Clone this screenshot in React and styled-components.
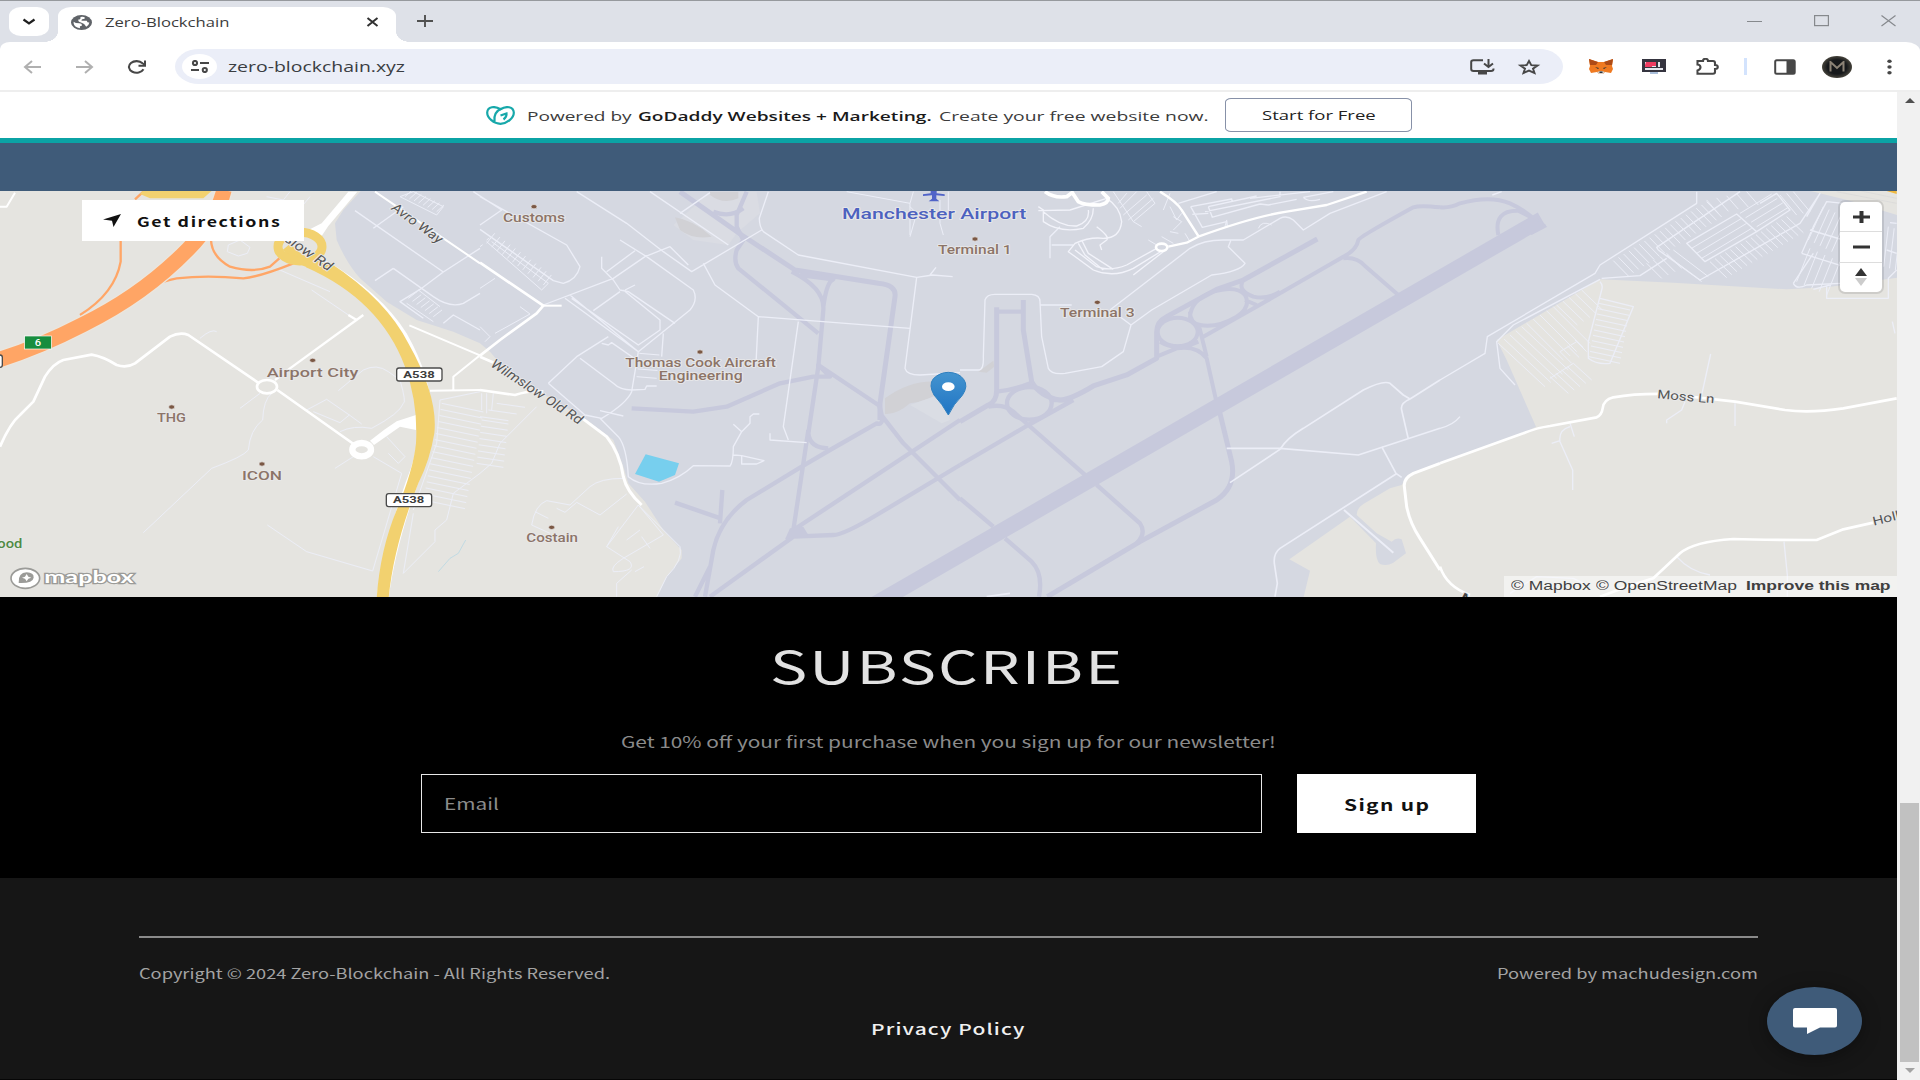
import React, { useLayoutEffect, useRef, useState } from "react";
import styled, { createGlobalStyle } from "styled-components";

const SITE = '"Noto Sans CJK SC", "Open Sans", sans-serif';
const CHROME = '"Open Sans", "Noto Sans", sans-serif';

const Global = createGlobalStyle`
  * { box-sizing: border-box; }
  html, body { margin: 0; padding: 0; overflow: hidden; background: #161616; }
  body { font-family: ${SITE}; }
  button { border: 0; padding: 0; margin: 0; background: none; font: inherit; }
`;

/* Text set wide: the glyphs are scaled horizontally to fill a given width. */
const FitBox = styled.span`
  display: block;
  flex: none;
  width: ${(p) => p.$w}px;
  text-align: left;
  white-space: pre;
  line-height: 24px;
  height: 24px;
  font-family: ${(p) => p.$font || SITE};
  font-size: ${(p) => p.$size || 14}px;
  font-weight: ${(p) => p.$weight || 400};
  letter-spacing: ${(p) => p.$track || 0}px;
  color: ${(p) => p.$color || "inherit"};
`;
const FitInner = styled.span`
  display: inline-block;
  transform-origin: 0 50%;
`;
function FitText({ width, font, size, weight, track = 0, color, className, children }) {
  const ref = useRef(null);
  const [k, setK] = useState(1);
  useLayoutEffect(() => {
    const n = ref.current.offsetWidth - track;
    if (n > 0) setK(width / n);
  }, [width, track]);
  return (
    <FitBox className={className} $w={width} $font={font} $size={size} $weight={weight} $track={track} $color={color}>
      <FitInner ref={ref} style={{ transform: `scaleX(${k})` }}>{children}</FitInner>
    </FitBox>
  );
}

const Window = styled.div`
  width: 1920px;
  height: 1080px;
  display: flex;
  flex-direction: column;
  background: #dee1e8;
  border-top: 1px solid #96999d;
  overflow: hidden;
`;

/* ---------- tab strip ---------- */
const TabStrip = styled.div`
  height: 41px;
  flex: none;
  display: flex;
  align-items: flex-start;
  padding: 6px 24px 0 9px;
`;
const TabSearch = styled.button`
  width: 40px;
  height: 29px;
  border-radius: 12px / 9px;
  background: #fff;
  display: grid;
  place-items: center;
`;
const Tab = styled.div`
  position: relative;
  width: 338px;
  height: 35px;
  margin-left: 9px;
  padding: 0 17px 5px 13px;
  display: flex;
  align-items: center;
  background: #fff;
  border-radius: 13px 13px 0 0 / 9px 9px 0 0;
  &::before, &::after {
    content: "";
    position: absolute;
    bottom: 0;
    width: 14px;
    height: 10px;
  }
  &::before { left: -14px; background: radial-gradient(14px 10px at 0 0, transparent 97%, #fff 100%); }
  &::after { right: -14px; background: radial-gradient(14px 10px at 100% 0, transparent 97%, #fff 100%); }
`;
const TabTitle = styled(FitText)`margin-left: 13px;`;
const TabClose = styled.span`margin-left: auto; display: flex;`;
const NewTab = styled.span`margin: 8px 0 0 21px; display: flex;`;
const WinControls = styled.div`
  margin: 8px 0 0 auto;
  display: flex;
  gap: 52px;
`;

/* ---------- toolbar ---------- */
const Toolbar = styled.div`
  height: 50px;
  flex: none;
  display: flex;
  align-items: center;
  padding: 1px 26px 0 23px;
  background: #fff;
  border-bottom: 2px solid #eee;
  border-radius: 10px 14px 0 0 / 7px 9px 0 0;
`;
const Nav = styled.div`display: flex; align-items: center; gap: 33px; svg { display: block; }`;
const Omnibox = styled.div`
  width: 1388px;
  height: 35px;
  margin-left: 28px;
  padding: 0 22px 0 7px;
  display: flex;
  align-items: center;
  background: #ebeef8;
  border-radius: 24px / 17.5px;
`;
const SiteChip = styled.span`
  width: 35px;
  height: 25px;
  margin-right: 11px;
  border-radius: 50%;
  background: #fff;
  display: grid;
  place-items: center;
`;
const OmniIcons = styled.span`margin-left: auto; display: flex; gap: 22px; align-items: center;`;
const Extensions = styled.div`
  display: flex;
  align-items: center;
  margin-left: 26px;
  gap: 29px;
`;
const Divider = styled.i`width: 3px; height: 17px; margin: 0 -2px 0 -4px; background: #d3e3fd;`;
const Avatar = styled.span`
  width: 30px;
  height: 22px;
  margin: 0 6px 0 -3px;
  border-radius: 50%;
  background: radial-gradient(#16181b 45%, #48453c 72%);
  display: grid;
  place-items: center;
`;

/* ---------- page ---------- */
const Viewport = styled.div`flex: 1; display: flex; min-height: 0;`;
const Page = styled.main`width: 1897px; display: flex; flex-direction: column;`;
const Scroll = styled.aside`
  width: 23px;
  background: #f1f1f1;
  display: flex;
  flex-direction: column;
  align-items: center;
  padding: 6px 1px 0 3px;
`;
const Thumb = styled.i`width: 19px; height: 259px; margin-top: 700px; background: #c1c1c1;`;
const Caret = styled.i`
  width: 0; height: 0;
  border: 5.5px solid transparent;
  ${(p) => (p.$down ? "border-top: 5px solid #a3a3a3; border-bottom: 0; margin-top: 6px;" : "border-bottom: 5px solid #505050; border-top: 0;")}
`;

const Promo = styled.div`
  height: 51px;
  flex: none;
  display: flex;
  align-items: center;
  padding: 0 0 0 486px;
  background: #fff;
  border-bottom: 5px solid #0ba3a5;
`;
const PromoText = styled.div`display: flex; gap: 7px; margin-left: 12px; padding-top: 1px;`;
const PromoButton = styled.button`
  width: 187px;
  height: 34px;
  margin-left: 17px;
  border: 1px solid #8791a8;
  border-radius: 6px / 4px;
  padding-bottom: 1px;
  display: flex;
  justify-content: center;
  align-items: center;
`;
const Band = styled.div`height: 48px; flex: none; background: #3f5b79;`;

const MapPane = styled.section`
  position: relative;
  height: 406px;
  flex: none;
  overflow: hidden;
  background: #e5e4e0;
`;
const MapSvg = styled.svg`display: block;`;
const Directions = styled.button`
  position: absolute;
  left: 82px;
  top: 9px;
  width: 222px;
  height: 41px;
  padding-left: 21px;
  display: flex;
  align-items: center;
  gap: 16px;
  background: #fff;
  color: #111;
`;
const Zoomer = styled.div`
  position: absolute;
  left: 1840px;
  top: 11px;
  width: 42px;
  height: 90px;
  border-radius: 5px;
  background: #fff;
  box-shadow: 0 0 0 2px rgba(0, 0, 0, 0.1);
  display: flex;
  flex-direction: column;
`;
const ZoomKey = styled.button`
  flex: 1;
  display: grid;
  place-items: center;
  & + & { border-top: 1px solid #ddd; }
`;
const Attribution = styled.div`
  position: absolute;
  right: 0;
  bottom: 0;
  width: 393px;
  height: 21px;
  padding: 0 7px 1px;
  display: flex;
  align-items: center;
  background: rgba(255, 255, 255, 0.5);
  color: #404040;
`;
const Gap = styled.i`flex: 1;`;

const Subscribe = styled.section`
  height: 281px;
  flex: none;
  background: #000;
  display: flex;
  flex-direction: column;
  align-items: center;
  padding-top: 56px;
`;
const Title = styled(FitText)`margin-right: 5px;`;
const Lead = styled(FitText)`margin-top: 52px; margin-right: 1px;`;
const Form = styled.div`display: flex; gap: 35px; margin-top: 21px;`;
const Field = styled.div`
  width: 841px;
  height: 59px;
  padding: 0 0 2px 22px;
  border: 1px solid #e8e8e8;
  display: flex;
  align-items: center;
`;
const Submit = styled.button`
  width: 179px;
  height: 59px;
  background: #fff;
  display: grid;
  place-items: center;
`;
const Footer = styled.footer`
  position: relative;
  flex: 1;
  background: #161616;
  padding: 58px 139px 0;
  display: flex;
  flex-direction: column;
  align-items: center;
  border-bottom: 1px solid #060606;
`;
const Legal = styled.div`
  width: 1619px;
  padding-top: 23px;
  border-top: 2px solid #8a8a8a;
  display: flex;
  justify-content: space-between;
`;
const Policy = styled(FitText)`margin-top: 32px; margin-right: 1px;`;
const Chat = styled.button`
  position: absolute;
  left: 1767px;
  top: 109px;
  width: 95px;
  height: 68px;
  border-radius: 50%;
  background: #3f5b79;
  box-shadow: 0 3px 18px rgba(0, 0, 0, 0.35);
  display: grid;
  place-items: center;
`;

/* ---------- map drawing ---------- */
const ROAD = "#ffffff";
const LANE = "#eceef7";
const TAXI = "#c7c9dc";
const LAND = "#e5e4e0";

const Sheet = ({ x, children }) => (
  <g transform={`translate(${x} -1) scale(0.33333)`}>{children}</g>
);
const Line = ({ d, w = 4, c = LANE }) => (
  <path d={d} fill="none" stroke={c} strokeWidth={w} strokeLinejoin="round" />
);
const comb = (x1, y1, x2, y2, n, dx, dy) => {
  let d = "";
  for (let i = 0; i < n; i++) {
    const t = n > 1 ? i / (n - 1) : 0;
    d += `M${(x1 + (x2 - x1) * t).toFixed(1)} ${(y1 + (y2 - y1) * t).toFixed(1)}l${dx} ${dy}`;
  }
  return d;
};
const Label = ({ x, y, w, size = 36, c = "#8c7468", dot, rotate, weight = 500, italic, children }) => (
  <g>
    {dot && <ellipse cx={dot[0]} cy={dot[1]} rx="9" ry="6.5" fill="#7b5844" stroke="#eceaea" strokeWidth="2" />}
    <text
      x={x} y={y} textLength={w} lengthAdjust="spacingAndGlyphs" fontSize={size} fill={c}
      fontFamily="Roboto, 'Open Sans', sans-serif" fontWeight={weight} fontStyle={italic ? "italic" : "normal"}
      stroke="#e9e9ea" strokeWidth="5" strokeLinejoin="round" paintOrder="stroke"
      transform={rotate ? `rotate(${rotate} ${x} ${y})` : undefined}
    >{children}</text>
  </g>
);
const Shield = ({ x, y }) => (
  <g>
    <rect x={x} y={y} width="136" height="39" rx="7" fill="#fff" stroke="#4b4b4b" strokeWidth="4" />
    <text x={x + 20} y={y + 29} textLength="94" lengthAdjust="spacingAndGlyphs" fontSize="29" fontWeight="700" fontFamily="Roboto, sans-serif" fill="#3d3d3d">A538</text>
  </g>
);

function AirportMap() {
  return (
    <MapSvg width="1897" height="406" viewBox="0 0 1897 406">
      <rect width="1897" height="406" fill="#d5d8e1" />
      <Sheet x={0}>
        <path fill={LAND} d="M0 0H1085L1030 60L1005 100L1010 150Q1040 220 1080 265L1160 335L1250 390L1360 425L1440 460L1470 485L1500 520L1610 600L1760 690L1840 750L1870 830L1885 880L1935 935L1990 1020L2045 1080V1105L2000 1160L1970 1225H0Z" />
      </Sheet>
      <Sheet x={1440}>
        <path fill={LAND} d="M480 268L700 278L1040 298L1160 292L1380 262V1225H-410L-390 1142L-452 1108L-270 980L-192 1060Q-195 1110 -180 1122Q-160 1130 -140 1118L-102 1090L-115 1048Q-130 1040 -145 1055L-190 1030L-250 975Q-250 955 -230 942L-150 895L-115 885L-100 860L0 820L250 730L288 710L200 510L170 450Z M1100 0H1380V78L1230 32Z" />
      </Sheet>

      {/* pale hard standing */}
      <Sheet x={480}>
        <path fill="#dadce3" d="M690 5H830L840 70L770 130L745 165L640 150L580 105Z" />
        <path fill="#d1d1d5" d="M690 5H775V25Q730 45 690 15ZM585 82Q640 90 695 140Q640 150 600 120Z" />
        <path fill="#d1d1d5" d="M1215 625Q1290 570 1370 575L1395 600Q1340 635 1290 640Q1250 675 1215 672Z" />
        <path fill="#dadde4" d="M1290 645L1390 610L1410 690L1385 700Z" />
      </Sheet>
      <Sheet x={960}><path fill="#d1d1d5" d="M55 545L100 512L103 530L80 548Z" /></Sheet>

      {/* runway and taxiways */}
      <Sheet x={960}>
        <Line c={TAXI} w={47} d="M-260 1245L1745 88" />
        <Line c={TAXI} w={15} d="M0 695L85 645Q110 635 110 600V352M190 330V420L215 575Q240 620 300 630Q330 630 400 588L500 555L590 505V425Q590 395 620 380L770 298L850 270L1072 147" />
        <Line c={TAXI} w={13} d="M110 365H190M110 605Q160 600 215 578M85 650Q130 640 160 665L205 705L375 855M0 825L205 705L340 630M0 925L100 1010M270 630H320" />
        <ellipse cx="208" cy="640" rx="67" ry="49" fill="none" stroke={TAXI} strokeWidth="13" />
        <ellipse cx="653" cy="426" rx="60" ry="43" fill="none" stroke={TAXI} strokeWidth="12" />
        <Line c={TAXI} w={12} d="M690 385Q690 330 760 305Q830 285 855 315Q875 350 830 380Q770 415 720 405Q690 400 690 365M850 270Q830 300 880 320Q920 330 960 305M600 455Q650 485 715 455M590 500L650 475Q710 465 740 505L768 630M715 400L740 500M730 440L960 310L1150 200Q1190 180 1195 150Q1200 140 1360 52Q1380 45 1440 52M1150 205Q1190 200 1215 228L1315 315M855 330L890 345" />
        <Line c={TAXI} w={15} d="M780 670L815 815Q830 890 770 930L540 1055L262 1220" />
        <Line c={TAXI} w={13} d="M410 885L540 1000Q560 1030 530 1060M135 1045L215 1115Q250 1150 237 1220" />
      </Sheet>
      <Sheet x={1440}>
        <Line c={TAXI} w={12} d="M0 52Q30 55 60 40Q150 15 210 40Q245 55 280 85L315 110M175 135Q160 60 235 62L270 80" />
        <path fill={TAXI} d="M270 80L322 110L275 135L240 110Z" />
      </Sheet>
      <Sheet x={480}>
        <Line c={TAXI} w={15} d="M600 5L785 135L945 240L1195 280Q1250 285 1245 320L1200 640V690" />
        <Line c={TAXI} w={13} d="M800 5L770 75V110L790 150L770 180Q760 215 775 235L1015 430M700 65Q750 85 790 55M935 245Q1035 295 1030 360L1015 530L985 730Q990 775 1045 775M960 255L1060 268Q1040 275 1030 350" />
        <Line c={TAXI} w={13} d="M455 655L640 665L740 650L900 580L1000 560H1050L1015 525L1195 645M1200 670L1270 760L1440 930M1195 640Q1220 710 1190 700L1050 780L965 830L800 930Q720 990 700 1080L675 1220M985 720L940 1020L1440 690M645 1220L690 1130M690 1220L940 1040L1060 1035Q1090 1035 1190 975L1440 825" />
        <Line c={TAXI} w={13} d="M585 938L722 985M727 900L720 1000" />
        <path fill={TAXI} d="M930 1015L970 1010L985 1035L940 1045L915 1048Z" />
      </Sheet>

      {/* minor lanes, west */}
      <Sheet x={0}>
        <Line d="M1065 62L1330 246L1440 175M1120 115L1210 50M1180 235L1125 272M1330 246L1265 295L1200 335L1270 385M1180 235L1300 320Q1350 355 1390 340L1440 310M1330 400L1360 375L1440 420" />
        <Line d="M1200 20L1310 75L1330 50L1240 5ZM1255 300L1320 350M1220 340L1300 395" w={3} />
        <Line d={comb(1215, 20, 1310, 65, 8, 22, -20)} w={3} />
        <Line d={comb(1225, 325, 1300, 380, 7, 26, -20)} w={3} />
        <Line d="M835 238L990 305M935 300L1060 385M600 445Q635 415 650 425M720 655L780 610M815 610Q790 630 788 690Q750 720 745 780Q730 800 635 835L430 1028M802 1005L920 1085L1118 1143L1205 850L1120 800M1015 602L1090 540Q1130 520 1165 545L1200 570Q1220 640 1210 640Q1200 670 1115 715Q1060 705 1020 725M920 660L980 628L1048 675L1020 698L940 665M1048 675L1085 702M1005 835L1060 800M1160 740L1215 800L1195 820L1165 790M1240 970L1210 1150L1305 1055V1020L1340 990L1360 910L1440 850M800 20L850 30L870 5M905 50L930 20" w={3} />
        <Line d="M1320 630L1310 760L1240 960M1320 630L1440 605M685 165L720 150L750 172L742 190L715 198L682 185Z" w={3} />
        <Line d={comb(1325, 640, 1270, 930, 17, 125, 26)} w={3} />
        <Line d="M1315 1145L1350 1105L1375 1090L1397 1050" w={2} c="#aed4e4" />
        <Line c={ROAD} w={8} d="M0 770Q30 700 60 675L100 635L135 560Q160 520 190 510L275 494Q310 500 350 525Q380 535 405 520L510 440Q540 425 565 435L785 585M832 600L1065 765" />
        <Line c={ROAD} w={7} d="M825 570L870 535L1090 375M1045 375L1070 390" />
        <ellipse cx="801" cy="590" rx="30" ry="20" fill={LAND} stroke={ROAD} strokeWidth="8" />
        <ellipse cx="1085" cy="779" rx="28" ry="20" fill={LAND} stroke={ROAD} strokeWidth="19" />
        <path fill={ROAD} d="M1110 752Q1150 720 1190 694L1248 675V720L1200 710L1122 765Z" />
        <Line c={ROAD} w={6} d="M0 50L20 50L45 8M1125 5L1440 220M1228 406L1440 496L1360 560V600M1290 602L1440 600" />
        <path fill={ROAD} d="M1045 5H1072L985 108L965 138L925 120L965 100Z" />
        <Line c="#ffa667" w={7} d="M362 150V215Q345 310 240 375M633 150Q635 200 690 230Q760 250 810 230L838 205M390 335Q450 280 530 265Q620 255 730 265Q780 260 880 220M405 28L430 5" />
        <path d="M672 0Q650 90 565 177Q430 315 250 403Q120 470 0 508" fill="none" stroke="#ece6dd" strokeWidth="53" />
        <path d="M672 0Q650 90 565 177Q430 315 250 403Q120 470 0 508" fill="none" stroke="#ffa565" strokeWidth="46" />
        <path d="M430 0H638L610 25H450L420 12Z" fill="#f2d16f" />
        <Line c={ROAD} w={36} d="M960 222Q1130 320 1205 440Q1290 590 1275 720Q1265 810 1235 880Q1165 1080 1148 1225" />
        <Line c="#f2d16f" w={29} d="M860 170Q905 225 960 222" />
        <ellipse cx="900" cy="170" rx="66" ry="43" fill="none" stroke="#f2d16f" strokeWidth="27" />
        <path fill="#f2d16f" d="M918 216L990 218Q1160 330 1225 460Q1315 620 1303 730Q1290 810 1255 880Q1180 1070 1166 1225H1130Q1140 1080 1190 960Q1240 840 1248 760Q1255 640 1215 530Q1140 330 918 232Z" />
        <rect x="74" y="438" width="80" height="39" fill="#178d3e" stroke="#fff" strokeWidth="2" />
        <text x="104" y="467" fontSize="27" textLength="19" lengthAdjust="spacingAndGlyphs" fontFamily="Roboto, sans-serif" fontWeight="500" fill="#fff">6</text>
        <rect x="-30" y="495" width="37" height="37" rx="7" fill="#fff" stroke="#4b4b4b" strokeWidth="4" />
        <Shield x={1190} y={534} />
        <Shield x={1159} y={911} />
      </Sheet>

      {/* centre west */}
      <Sheet x={480}>
        <Line d="M-20 5L65 60L0 105M0 20L260 165L300 230Q290 270 250 280L220 272L0 118M290 5L440 100L550 185L635 245L845 120M510 5L745 165M600 70L690 8M865 5L838 85Q838 110 850 125L955 195L1310 262L1358 255L1418 260M1350 255L1368 232M1310 262L1275 535Q1280 555 1320 555L1440 548M670 220L705 285L835 380L1290 415M835 380L828 520M955 395L910 710L925 750M870 730V750L980 758M190 345L400 265L495 200L570 170L625 225M420 150L500 200L640 300Q655 330 630 360L475 485L270 315M365 200V235L400 270L420 300L445 305L585 400M420 305L340 362M380 245L465 182M465 285L435 300M430 300L540 390V420L475 465L275 325M205 580L290 500L385 440M255 325L475 485L455 605Q440 640 365 685L315 675L205 580M300 505L400 580Q420 600 455 600L495 598L500 588H530M365 460L385 465L395 458L470 510M550 430L545 500M360 662L430 678" />
        <Line d="M360 685L415 740Q440 770 445 860Q480 890 545 880Q600 865 640 827L750 828Q760 815 760 770L785 725L810 700V680L820 672H838M760 703L785 725M760 795L785 797V822H830L852 812L785 797" />
        <Line d="M0 295L45 265M120 350L150 372M0 410L30 440L15 455M45 430L150 372M430 865Q360 865 330 890L270 945L200 932Q165 945 155 1005L210 1030M165 965L205 985M230 955L255 967L290 937L360 975L440 912M475 945L380 1070L450 1115Q470 1145 400 1145Q390 1130 430 1105L550 1035L475 945L600 1070Q610 1110 560 1160L530 1220M380 1070L415 1010M410 1220V1180L455 1140M440 1050L480 1020M485 1040L510 1075M465 1145L492 1130" w={3} />
        <Line w={3} d={comb(20, 160, 190, 285, 12, 24, -30) + comb(0, 170, 20, 150, 2, 8, -6) + comb(478, 490, 470, 560, 4, 60, 5)} />
        <Line w={3} d="M20 155L185 300L205 280L35 155M0 850L35 820L60 760L170 650M5 610V660M20 610V670M40 610L35 660" />
        <Line w={3} d={comb(5, 690, -10, 820, 8, 80, 12) + comb(50, 640, 0, 680, 3, 85, 12)} />
        <Line w={3} d="M1100 5L1290 40V135M1290 40L1300 5M1290 50L1310 70L1290 140M1380 30V100L1390 135M1405 5V60" />
        <Line c={ROAD} w={8} d="M0 218L190 347L170 370L60 450L0 497M0 500L45 520M0 600L105 615Q150 600 190 605" />
        <Line c={ROAD} w={9} d="M300 680L380 740Q420 790 430 860Q440 905 485 945" />
        <Line c={ROAD} w={6} d="M190 347H245" />
        <path d="M497 793L597 820L585 855L537 875L465 852Z" fill="#77cfee" />
      </Sheet>

      {/* terminals and the east side */}
      <Sheet x={960}>
        <Line d="M0 540H55Q72 540 70 500L75 330Q80 313 105 313H215Q240 315 240 335L245 440L265 535Q275 555 315 550L425 530L490 485L513 405L480 380M240 345H335M450 360L690 175Q730 150 790 150H850L960 85Q980 75 1000 90L1030 120L1110 70L1280 5M513 405L575 360L755 255Q840 245 855 220L805 170L812 152M270 205V140L300 110M275 165H340" />
        <Line w={4} c="#f2f3fa" d="M235 50L250 60V95Q300 130 370 115Q400 90 400 55M250 65Q300 110 350 108Q390 95 385 60M235 62L330 60L440 25Q480 50 485 95Q480 145 430 145Q390 140 345 160L325 185L400 240Q460 265 520 235L610 180M345 180L410 230Q450 245 500 225L590 175M355 160L375 195L430 240M365 150L385 190L460 238M410 110Q450 140 440 150L420 165L425 180M520 255L610 185" />
        <Line w={3} d="M460 5L520 95L585 40L560 5M475 40L500 10M480 55L530 5M490 75L560 15M505 90L580 25M520 95L545 110M610 60L630 10M630 50L650 90L665 70M630 125L655 130M640 80L665 95L640 120M605 140L640 160M565 150L590 165M675 130L690 155M895 115Q905 90 935 105M800 90L795 110" />
        <Line w={4} d="M655 40L770 5M692 50L815 27L817 35M692 50L727 112L800 95M697 73L745 70M745 50L757 82M735 65L960 20L960 5M755 82L900 42M745 50L890 18M900 42L925 45L1010 28M870 25L1050 5M1030 22Q1045 38 1080 28M1030 22L1120 5M800 92L802 110" />
        <Line c={ROAD} w={7} d="M600 5Q650 35 665 60L715 138M625 170L680 158L715 140Q880 80 980 65L1100 45L1220 5" />
        <ellipse cx="605" cy="172" rx="17" ry="11" fill="#d5d8e1" stroke={ROAD} strokeWidth="8" />
        <path d="M335 5L355 35Q370 45 420 45Q445 40 445 25L425 5M255 5Q280 25 320 20L340 5" fill="none" stroke={ROAD} strokeWidth="11" />
        <Line d="M800 775H960L1195 795L1440 715M810 878L960 778Q980 745 1030 715L1210 600Q1270 570 1290 580L1330 615L1350 627L1440 570M1350 627Q1320 640 1325 660L1345 747M1265 770L1308 850L1325 862M1308 852L960 1075Q940 1090 943 1120L952 1180L945 1220" w={5} />
        <Line d="M1152 960L1300 1088" w={6} />
        <Line c={ROAD} w={9} d="M1440 820L1360 850Q1330 865 1333 890L1340 950Q1350 1000 1380 1045L1440 1140" />
        <Line d="M80 1220L150 1210" w={5} />
      </Sheet>
      <Sheet x={1440}>
        <Line d="M0 570L135 490L142 440L465 250L480 225L770 40V5M480 268L220 405L170 455L180 535L225 585M480 275Q490 285 485 300L445 455V505Q470 525 510 520L580 350L480 325M157 15L185 5M60 680Q40 705 0 715M485 265L600 257L680 205M655 180L650 172L720 125L900 5M655 180L780 270L1080 100L1140 10L1100 80M740 160L890 72L950 125L795 215ZM960 40L1010 10L1050 60L950 125M1085 190L1120 110L1160 35L1210 40M1085 190L1230 235M1060 280L1120 190M1060 280Q1070 300 1100 285L1200 280M1120 298L1170 285M1160 290V325H1345V265L1370 240M1110 120L1210 150M1340 180L1370 190M1350 98L1370 100" w={4} />
        <Line w={3} d={comb(520, 212, 800, 35, 19, 45, 46) + comb(620, 220, 680, 190, 4, 45, 45) + comb(810, 215, 1040, 80, 16, 50, 48) + comb(680, 195, 700, 180, 2, 105, 80) + comb(755, 175, 785, 205, 3, 150, -90) + comb(900, 70, 950, 110, 4, 95, -58) + comb(800, 30, 920, 5, 5, 35, 40) + comb(1020, 15, 1060, 5, 3, 50, 60)} />
        <Line w={3} d={comb(1150, 50, 1220, 85, 5, -45, 100) + comb(1110, 175, 1200, 215, 5, -40, 100) + comb(1345, 110, 1380, 120, 3, -14, 120)} />
        <Line w={3} d={comb(175, 460, 245, 410, 5, 140, 130) + comb(260, 400, 340, 350, 5, 110, 110) + comb(350, 345, 425, 300, 5, 62, 60) + comb(330, 560, 400, 520, 5, 55, 50) + comb(360, 485, 405, 450, 3, 35, 35)} />
        <Line w={3} d="M360 485L410 455M330 565L400 520" />
        <Line w={3} d={comb(477, 340, 447, 500, 11, 93, 20)} />
        <Line w={4} d="M812 492L785 615M735 635L725 660L680 690V700M885 640V708M390 700L403 740M390 710Q355 720 360 755L398 840V900M335 760L360 752M1357 395L1365 430M710 1100Q750 1145 810 1155M1032 1055L1042 1155V1220M210 1210L290 1160L400 1165L430 1180" />
        <Line c="#d8d8d8" w={2} d="M1190 5L1370 40M1250 0L1370 25" />
        <path d="M1330 0H1370V12Z" fill="#f0b93f" />
        <Line c={ROAD} w={8} d="M0 820L250 730Q290 713 330 708L470 682Q485 675 488 655Q490 630 520 622Q590 610 680 612L885 635L1035 660Q1110 670 1210 655L1370 625M480 1220L560 1190L640 1165L720 1090Q760 1055 880 1047Q960 1050 1130 1050L1210 1018L1300 998M0 1130Q20 1190 90 1215" />
      </Sheet>

      {/* labels */}
      <Sheet x={0}>
        <Label x={800} y={560} w={275} size={38} dot={[938, 511]}>Airport City</Label>
        <Label x={471} y={696} w={87} dot={[515, 651]}>THG</Label>
        <Label x={726} y={871} w={120} size={39} dot={[786, 822]}>ICON</Label>
        <Label x={-8} y={1074} w={75} size={37} c="#4f8a43">ood</Label>
        <Label x={1172} y={58} w={178} size={39} rotate={36} c="#555" weight={400} italic>Avro Way</Label>
        <Label x={765} y={93} w={268} size={41} rotate={34.5} c="#555" weight={400} italic>Wilmslow Rd</Label>
        <ellipse cx="76" cy="1165" rx="43" ry="30" fill="#fff" stroke="#9b9b98" strokeWidth="5" />
        <path d="M56 1179Q54 1148 80 1147Q102 1148 101 1163Q98 1181 56 1179Z" fill="#9b9b98" />
        <path d="M80 1152L85 1160L94 1163L85 1166L80 1174L75 1166L66 1163L75 1160Z" fill="#fff" />
        <text x="133" y="1180" textLength="268" lengthAdjust="spacingAndGlyphs" fontSize="50" fontWeight="700" fontFamily="Lato, sans-serif" fill="#fff" stroke="#9b9b98" strokeWidth="7" paintOrder="stroke">mapbox</text>
      </Sheet>
      <Sheet x={480}>
        <Label x={69} y={96} w={186} dot={[162, 50]}>Customs</Label>
        <Label x={436} y={530} w={452} dot={[660, 486]}>Thomas Cook Aircraft</Label>
        <Label x={536} y={569} w={252}>Engineering</Label>
        <Label x={139} y={1057} w={155} dot={[215, 1012]}>Costain</Label>
        <Label x={30} y={528} w={320} size={40} rotate={33.5} c="#555" weight={400} italic>Wilmslow Old Rd</Label>
        <Label x={1086} y={88} w={553} size={44} c="#4d62bf">Manchester Airport</Label>
        <path d="M1352 0H1370V10L1394 13V18L1369 16V26L1378 34H1346L1356 26V16L1329 18V13L1352 10Z" fill="#5063c8" />
        <Label x={1374} y={193} w={221} dot={[1485, 147]}>Terminal 1</Label>
        <path d="M1405 675Q1388 643 1362 615Q1345 585 1360 566Q1380 547 1405 547Q1437 548 1451 568Q1466 588 1447 616Q1420 643 1405 675Z" fill="url(#pin)" stroke="#2e7fbf" strokeWidth="3" />
        <ellipse cx="1405" cy="590" rx="19" ry="13" fill="#fff" />
      </Sheet>
      <Sheet x={960}>
        <Label x={300} y={381} w={224} dot={[412, 337]}>Terminal 3</Label>
      </Sheet>
      <Sheet x={1440}>
        <Label x={651} y={625} w={172} size={37} rotate={5} c="#555" weight={400}>Moss Ln</Label>
        <Label x={1301} y={1007} w={82} size={37} rotate={-14} c="#555" weight={400}>Holl</Label>
        <Label x={58} y={1230} w={50} size={38} rotate={28} c="#444" weight={500}>M</Label>
      </Sheet>
      <defs>
        <linearGradient id="pin" x1="0" y1="0" x2="0" y2="1">
          <stop offset="0" stopColor="#4494cf" />
          <stop offset="1" stopColor="#1f74c4" />
        </linearGradient>
      </defs>
    </MapSvg>
  );
}

/* ---------- icons ---------- */
const Svg = ({ w, h, vb, sw = 2, children }) => (
  <svg width={w} height={h} viewBox={vb || `0 0 ${w} ${h}`} preserveAspectRatio="none" fill="none" stroke="#474747" strokeWidth={sw}>{children}</svg>
);

const TabBar = () => (
  <TabStrip>
    <TabSearch><Svg w={14} h={8}><path d="M1.5 1.5L7 5.5L12.5 1.5" stroke="#1f1f1f" strokeWidth="2.2" /></Svg></TabSearch>
    <Tab>
      <svg width="21" height="15" viewBox="0 0 20 20" preserveAspectRatio="none">
        <circle cx="10" cy="10" r="10" fill="#5f6368" />
        <path d="M2.500 9Q4 11 8 11Q10.500 11 10.500 13.500Q10 15 8.500 15V17.500Q3 16.500 2.500 11ZM9 2.500Q12 2 13 3V5Q10 5 10 7.500Q13 8 15 7.500Q15.500 10.500 17.500 10Q17 14 14.500 15.500Q13 11.500 9.500 10Q6.500 9 7 6Q9.500 6 9 2.500Z" fill="#fff" />
      </svg>
      <TabTitle width={124} size={13} font={CHROME} color="#3c3c3c">Zero-Blockchain</TabTitle>
      <TabClose><Svg w={13} h={10}><path d="M1.500 1L11.500 9M11.500 1L1.500 9" stroke="#303030" /></Svg></TabClose>
    </Tab>
    <NewTab><Svg w={16} h={12}><path d="M0 6H16M8 0V12" stroke="#505050" strokeWidth="1.900" /></Svg></NewTab>
    <WinControls>
      <Svg w={15} h={12} sw={1}><path d="M0 6.500H15" stroke="#86898d" /></Svg>
      <Svg w={15} h={12} sw={1.2}><rect x=".6" y=".6" width="13.800" height="10" stroke="#86898d" /></Svg>
      <Svg w={15} h={12} sw={1.2}><path d="M.5 .5L14.500 11M14.500 .5L.5 11" stroke="#86898d" /></Svg>
    </WinControls>
  </TabStrip>
);

const ToolbarRow = () => (
  <Toolbar>
    <Nav>
      <Svg w={19} h={14}><path d="M18 7H2M9 1L2 7L9 13" stroke="#b0b0b0" /></Svg>
      <Svg w={19} h={14}><path d="M1 7H17M10 1L17 7L10 13" stroke="#b0b0b0" /></Svg>
      <Svg w={20} h={14}><path d="M16.500 9.300A7.600 5.800 0 1 1 15.500 3.300L18 5" strokeWidth="2.100" /><path d="M18 .5V5.800H11.500" strokeWidth="2" /></Svg>
    </Nav>
    <Omnibox>
      <SiteChip>
        <Svg w={18} h={13}><circle cx="4" cy="3" r="2.100" /><path d="M9 3H18M0 10H8" /><circle cx="13.800" cy="10" r="2.100" /></Svg>
      </SiteChip>
      <FitText width={177} size={14.5} font={CHROME} color="#3a3d42">zero-blockchain.xyz</FitText>
      <OmniIcons>
        <Svg w={25} h={16}><path d="M13 1.200H3.500Q1.200 1.200 1.200 3V10Q1.200 12 3.500 12H21Q23.500 12 23.500 10V9.500M18.500 0V8M14 4.500L18.500 8L23 4.500" /><path d="M8 14H17" strokeWidth="3" /></Svg>
        <Svg w={24} h={16}><path d="M12 2L14.300 6.100L20.500 6.500L16 9.600L17.500 14L12 11.600L6.500 14L8 9.600L3.500 6.500L9.700 6.100Z" strokeWidth="1.900" /></Svg>
      </OmniIcons>
    </Omnibox>
    <Extensions>
      <svg width="24" height="15" viewBox="0 0 24 15">
        <path d="M0 0L9 3H15L24 0L23 7L24 10L22 14L16 13L14 15H10L8 13L2 14L0 10L1 7Z" fill="#ef7a21" />
        <path d="M0 0L9 3L7 6L1 6ZM24 0L15 3L17 6L23 6Z" fill="#ad4b17" />
        <path d="M8 13L10 15H14L16 13L13 12H11Z" fill="#d9cfc6" />
        <path d="M6 8L10 9L9 10ZM18 8L14 9L15 10ZM10.500 12.500H13.500V14H10.500Z" fill="#27313a" />
      </svg>
      <svg width="24" height="15" viewBox="0 0 24 15">
        <rect width="24" height="13" fill="#35343f" />
        <path d="M3 3H14V8H3ZM3 9H21V11H3Z" fill="#e6e7ee" />
        <path d="M4 3H14V7H10V8H3V6Z" fill="#ef3b61" />
        <path d="M16 3H18V8H16Z" fill="#e6e7ee" /><path d="M8 13H16V15H8Z" fill="#abc0dc" />
      </svg>
      <Svg w={24} h={17}><path d="M2.500 3H8Q8 .8 10.500 .8Q13 .8 13 3H18Q20 3 20 5V7Q22.800 7 22.800 9Q22.800 11 20 11V14Q20 15.700 18 15.700H2.500V12.500Q5.500 11.500 5.500 9.300Q5.500 7 2.500 6.500Z" strokeWidth="2.100" /></Svg>
      <Divider />
      <Svg w={22} h={16}><rect x="1.200" y="1.200" width="19.500" height="13.500" rx="1.500" /><path d="M12.500 1H20.500V15H12.500Z" fill="#474747" stroke="none" /></Svg>
      <Avatar><Svg w={16} h={11}><path d="M1.500 10.500V1L8 7L14.500 1V10.500" stroke="#8b8276" strokeWidth="2" /></Svg></Avatar>
      <Svg w={5} h={16}><g fill="#474747" stroke="none"><ellipse cx="2.500" cy="2.300" rx="2.200" ry="1.700" /><ellipse cx="2.500" cy="8" rx="2.200" ry="1.700" /><ellipse cx="2.500" cy="13.700" rx="2.200" ry="1.700" /></g></Svg>
    </Extensions>
  </Toolbar>
);

export default function App() {
  return (
    <>
      <Global />
      <Window>
        <TabBar />
        <ToolbarRow />
        <Viewport>
          <Page>
            <Promo>
              <svg width="29" height="19" viewBox="0 0 29 19" fill="none" stroke="#17a8aa" strokeWidth="2.200">
                <path d="M14.500 17.800C8 17.500 1 12 1.200 6.500C1.500 .5 9 -.3 14.500 3.200C20 -.3 27.500 .5 27.800 6.500C28 12 21 17.500 14.500 17.800Z" />
                <path d="M15.500 2.500Q7.500 6 8.500 15M14.500 9.500L20.500 7.500Q21 11 17.500 13.500" />
              </svg>
              <PromoText>
                <FitText width={104} size={13} font={CHROME} color="#3c3c3c">Powered by</FitText>
                <FitText width={294} size={13} weight={600} font={CHROME} color="#1a1a1a">GoDaddy Websites + Marketing.</FitText>
                <FitText width={269} size={13} font={CHROME} color="#3c3c3c">Create your free website now.</FitText>
              </PromoText>
              <PromoButton><FitText width={114} size={13} font={CHROME} color="#222">Start for Free</FitText></PromoButton>
            </Promo>
            <Band />
            <MapPane>
              <AirportMap />
              <Directions>
                <svg width="18" height="13" viewBox="0 0 18 13"><path d="M18 0L10.500 13L9 6.800L0 5.500Z" fill="#111" /></svg>
                <FitText width={143} size={13.5} weight={700} track={1.2}>Get directions</FitText>
              </Directions>
              <Zoomer>
                <ZoomKey><Svg w={17} h={12}><path d="M0 6H17" stroke="#333" strokeWidth="3" /><path d="M8.500 0V12" stroke="#333" strokeWidth="4" /></Svg></ZoomKey>
                <ZoomKey><Svg w={17} h={4}><path d="M0 2H17" stroke="#333" strokeWidth="3" /></Svg></ZoomKey>
                <ZoomKey><svg width="12" height="18" viewBox="0 0 12 18"><path d="M0 8L6 0L12 8Z" fill="#333" /><path d="M0 10L6 18L12 10Z" fill="#ccc" /></svg></ZoomKey>
              </Zoomer>
              <Attribution>
                <FitText width={80} size={12} font='"Liberation Sans", sans-serif'>© Mapbox</FitText><Gap />
                <FitText width={141} size={12} font='"Liberation Sans", sans-serif'>© OpenStreetMap</FitText><Gap /><Gap />
                <FitText width={144} size={12} weight={700} font='"Liberation Sans", sans-serif'>Improve this map</FitText>
              </Attribution>
            </MapPane>
            <Subscribe>
              <Title width={352} size={45} track={1.5} color="#e2e2e2">SUBSCRIBE</Title>
              <Lead width={655} size={15.5} color="#8b8b8b">Get 10% off your first purchase when you sign up for our newsletter!</Lead>
              <Form>
                <Field><FitText width={55} size={15.5} color="#8b8b8b">Email</FitText></Field>
                <Submit><FitText width={85} size={15.5} weight={700} track={1} color="#111">Sign up</FitText></Submit>
              </Form>
            </Subscribe>
            <Footer>
              <Legal>
                <FitText width={471} size={14} color="#a3a3a3">Copyright © 2024 Zero-Blockchain - All Rights Reserved.</FitText>
                <FitText width={261} size={14} color="#a3a3a3">Powered by machudesign.com</FitText>
              </Legal>
              <Policy width={154} size={15} weight={500} track={0.8} color="#f0f0f0">Privacy Policy</Policy>
              <Chat>
                <svg width="44" height="26" viewBox="0 0 44 26"><path d="M2 0H42Q44 0 44 2V17.500Q44 19.500 42 19.500H27L14 26V19.500H2Q0 19.500 0 17.500V2Q0 0 2 0Z" fill="#fff" /></svg>
              </Chat>
            </Footer>
          </Page>
          <Scroll><Caret /><Thumb /><Caret $down /></Scroll>
        </Viewport>
      </Window>
    </>
  );
}
